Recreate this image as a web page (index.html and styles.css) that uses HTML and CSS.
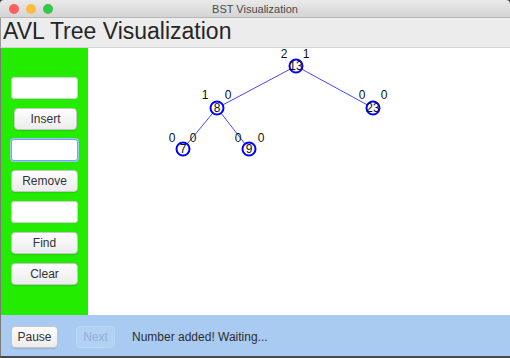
FILE: index.html
```html
<!DOCTYPE html>
<html>
    <head>
        <meta charset="utf-8">
        <title>BST Visualization</title>
        <link rel="stylesheet" href="styles.css">
    </head>
    <body>
        <div class="window">
            <div class="titlebar">
                <div class="lights">
                    <span class="light red"></span>
                    <span class="light yellow"></span>
                    <span class="light green"></span>
                </div>
                <div class="wintitle">BST Visualization</div>
                <div></div>
            </div>
            <div class="header">AVL Tree Visualization</div>

            <div class="main">
                <div class="side">
                    <input class="field" type="text">
                    <button class="btn btn-insert">Insert</button>
                    <input class="field focused" type="text">
                    <button class="btn">Remove</button>
                    <input class="field" type="text">
                    <button class="btn">Find</button>
                    <button class="btn">Clear</button>
                </div>

                <div class="canvas">
                    <svg class="tree" width="422" height="267" viewBox="0 0 422 267">
                        <line class="edge" x1="208" y1="18" x2="129" y2="60"/>
                        <line class="edge" x1="208" y1="18" x2="285" y2="60"/>
                        <line class="edge" x1="129" y1="60" x2="95" y2="101"/>
                        <line class="edge" x1="129" y1="60" x2="161" y2="101"/>

                        <!-- 13 -->
                        <circle class="node" cx="208" cy="18" r="6.5"/>
                        <text class="num" x="208" y="22">13</text>
                        <text class="bal" x="196" y="10">2</text>
                        <text class="bal" x="218" y="10">1</text>

                        <!-- 8 -->
                        <circle class="node" cx="129" cy="60" r="6.5"/>
                        <text class="num" x="129" y="64">8</text>
                        <text class="bal" x="117" y="51">1</text>
                        <text class="bal" x="140" y="51">0</text>

                        <!-- 23 -->
                        <circle class="node" cx="285" cy="60" r="6.5"/>
                        <text class="num" x="285" y="64">23</text>
                        <text class="bal" x="274" y="51">0</text>
                        <text class="bal" x="296" y="51">0</text>

                        <!-- 7 -->
                        <circle class="node" cx="95" cy="101" r="6.5"/>
                        <text class="num" x="95" y="105">7</text>
                        <text class="bal" x="84" y="94">0</text>
                        <text class="bal" x="105" y="94">0</text>

                        <!-- 9 -->
                        <circle class="node" cx="161" cy="101" r="6.5"/>
                        <text class="num" x="161" y="105">9</text>
                        <text class="bal" x="150" y="94">0</text>
                        <text class="bal" x="173" y="94">0</text>
                    </svg>
                </div>
            </div>

            <div class="footer">
                <button class="btn btn-pause">Pause</button>
                <button class="btn btn-next" disabled>Next</button>
                <span class="status">Number added! Waiting...</span>
            </div>
        </div>
    </body>
</html>
```

FILE: styles.css
```css
body{
    margin: 0;
    font-family: "Liberation Sans", Arial, sans-serif;
    background: #3a3a3a;
}

.window{
    width: 510px;
    height: 358px;
    display: flex;
    flex-direction: column;
    overflow: hidden;
    border-bottom: 2px solid #4a4a4a;
    box-sizing: border-box;
}

.titlebar{
    height: 18px;
    box-sizing: border-box;
    display: grid;
    grid-template-columns: 1fr auto 1fr;
    align-items: center;
    background: linear-gradient(#e9e9e9, #d4d4d4);
    border-bottom: 1px solid #b9b9b9;
    border-radius: 4px 4px 0 0;
}

.lights{
    display: flex;
    gap: 7px;
    padding-left: 9px;
}

.light{
    width: 10px;
    height: 10px;
    border-radius: 50%;
}
.red{ background: #fc605c; }
.yellow{ background: #fdbc40; }
.green{ background: #34c84a; }

.wintitle{
    font-size: 11px;
    color: #4a4a4a;
}

.header{
    height: 29px;
    line-height: 27px;
    padding-left: 2px;
    font-size: 23px;
    color: #262626;
    background: #ececec;
    border-bottom: 1px solid #d4d4d4;
    border-left: 1px solid #9a9a9a;
}

.main{
    height: 267px;
    display: flex;
}

.side{
    width: 88px;
    box-sizing: border-box;
    background: #23ec00;
    border-left: 1px solid #7a7a7a;
    display: flex;
    flex-direction: column;
    align-items: flex-start;
    gap: 9px;
    padding: 29px 0 0 10px;
}

.field{
    width: 67px;
    height: 22px;
    box-sizing: border-box;
    margin: 0;
    border: 1px solid #d0d0d0;
    border-radius: 3px;
    background: #fff;
    box-shadow: inset 0 1px 1px rgba(0,0,0,0.05);
}

.field.focused{
    border-color: #6ea6e6;
    box-shadow: 0 0 0 1px #9fc5f0;
}

.btn{
    height: 22px;
    width: 67px;
    box-sizing: border-box;
    margin: 0;
    padding: 0;
    font-family: "Liberation Sans", Arial, sans-serif;
    font-size: 12px;
    color: #333;
    background: linear-gradient(#fdfdfd, #ececec);
    border: 1px solid #c6c6c6;
    border-radius: 4px;
    box-shadow: 0 1px 1px rgba(0,0,0,0.12);
}

.btn-insert{
    width: 63px;
    margin-left: 3px;
}

.canvas{
    flex: 1;
    background: #fff;
}

.tree{
    display: block;
}

.edge{
    stroke: #4646ff;
    stroke-width: 1;
}

.node{
    fill: #fff;
    stroke: #0000ff;
    stroke-width: 2;
}

.num, .bal{
    font-family: "Liberation Sans", Arial, sans-serif;
    font-size: 12px;
    fill: #111;
    text-anchor: middle;
}

.footer{
    height: 41px;
    box-sizing: border-box;
    background: #a9cbf1;
    display: flex;
    align-items: flex-start;
    padding: 11px 0 0 10px;
    border-left: 1px solid #7a7a7a;
}

.btn-pause{
    width: 47px;
}

.btn-next{
    width: 39px;
    margin-left: 18px;
    color: #8fb0d6;
    background: #b3d1f3;
    border-color: #bcd6f3;
    box-shadow: none;
}

.status{
    margin-left: 17px;
    line-height: 22px;
    font-size: 12px;
    color: #2e2e2e;
}
```
